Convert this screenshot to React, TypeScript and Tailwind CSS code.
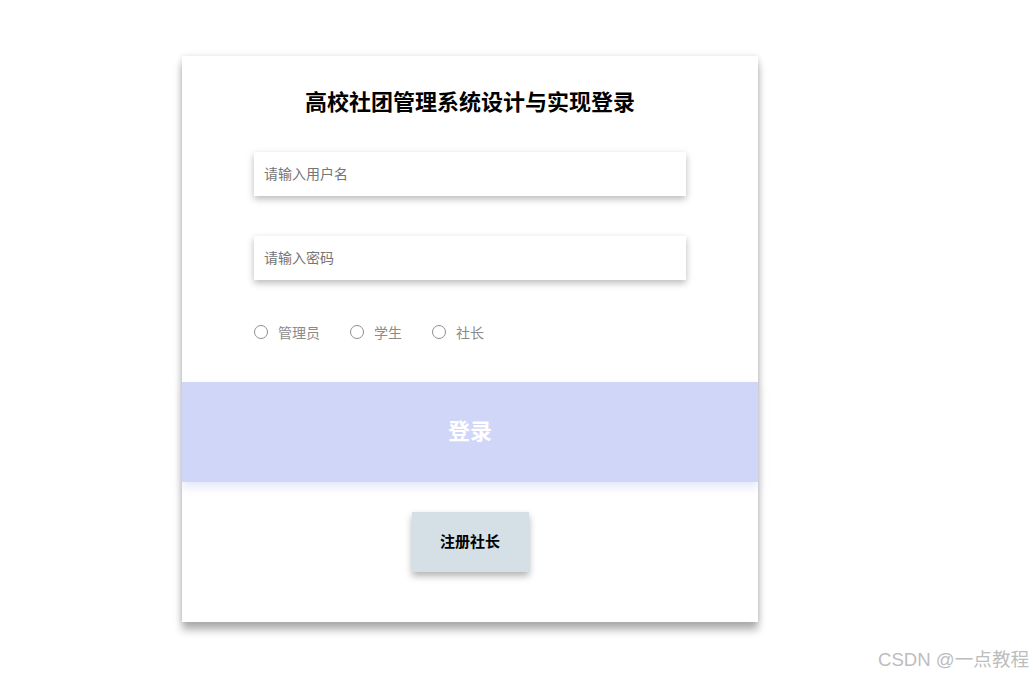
export default function App() {
  const roles = ["管理员", "学生", "社长"];

  return (
    <div className="relative w-[1033px] h-[678px] bg-white overflow-hidden font-['Microsoft_YaHei','Noto_Sans_CJK_SC',sans-serif]">
      {/* LOGIN CARD */}
      <div className="ml-[182px] mt-[56px] w-[576px] h-[566px] bg-white shadow-[0_8px_8px_rgba(0,0,0,0.3),0_0_6px_rgba(0,0,0,0.12)] flex flex-col items-center pt-[29px]">
        <h1 className="text-[22px] leading-[30px] font-bold text-black">高校社团管理系统设计与实现登录</h1>

        <input
          type="text"
          placeholder="请输入用户名"
          className="mt-[37px] w-[432px] h-[44px] px-[10px] pb-[2px] text-[14px] bg-white outline-none placeholder:text-[#757575] shadow-[0_3px_7px_rgba(0,0,0,0.28)]"
        />
        <input
          type="password"
          placeholder="请输入密码"
          className="mt-[40px] w-[432px] h-[44px] px-[10px] pb-[2px] text-[14px] bg-white outline-none placeholder:text-[#757575] shadow-[0_3px_7px_rgba(0,0,0,0.28)]"
        />

        <div className="mt-[42px] w-[432px] h-[20px] flex items-center gap-[30px] text-[14px] text-[#8a8a8a]">
          {roles.map((r) => (
            <label key={r} className="flex items-center gap-[10px]">
              <span className="w-[14px] h-[14px] rounded-full border border-[#8f8f8f] bg-white" />
              <span>{r}</span>
            </label>
          ))}
        </div>

        <button className="mt-[40px] w-full h-[100px] pb-[5px] bg-[#cfd6f7] text-white text-[22px] font-bold shadow-[0_6px_8px_rgba(207,214,247,0.5)]">
          登录
        </button>

        <button className="mt-[30px] w-[117px] h-[60px] pb-[2px] bg-[#d5dfe6] text-black text-[15px] font-bold shadow-[0_4px_7px_rgba(0,0,0,0.3)]">
          注册社长
        </button>
      </div>

      {/* WATERMARK */}
      <div className="absolute left-[878px] top-[646px] text-[18.6px] text-[#bdbdbd] font-['Liberation_Sans','Noto_Sans_CJK_SC',sans-serif]">
        CSDN @一点教程
      </div>
    </div>
  );
}
